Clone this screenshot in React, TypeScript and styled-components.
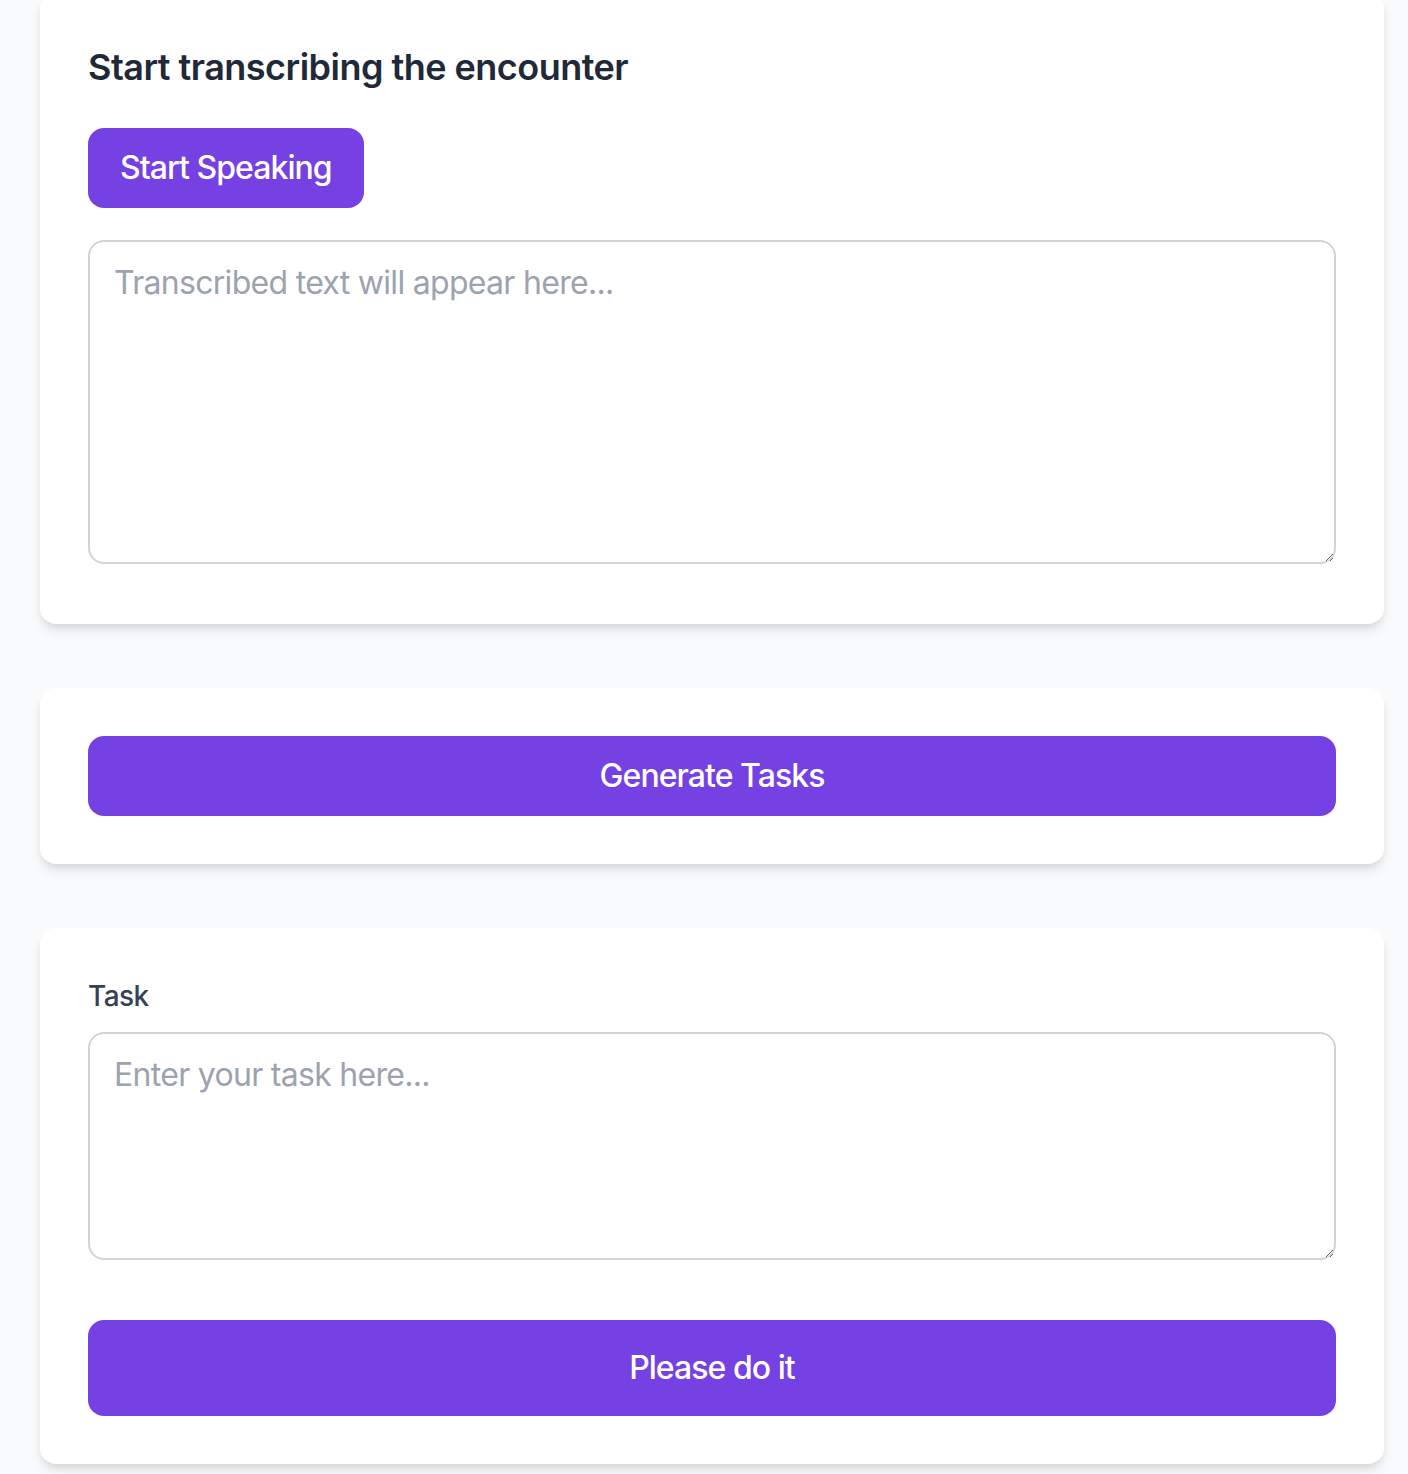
import React from "react";
import styled, { createGlobalStyle } from "styled-components";

const GlobalStyle = createGlobalStyle`
  html, body {
    margin: 0;
    padding: 0;
    background: #f9fafb;
    font-family: Inter, "Noto Sans", sans-serif;
  }
  * { box-sizing: border-box; }
`;

const Page = styled.main`
  display: flex;
  flex-direction: column;
  gap: 64px;
  padding: 0 24px 40px 40px;
  margin-top: -8px;
`;

const Card = styled.section`
  background: #ffffff;
  border-radius: 16px;
  box-shadow: 0 8px 12px -2px rgba(0, 0, 0, 0.1), 0 4px 8px -4px rgba(0, 0, 0, 0.1);
  padding: 48px;
  display: flex;
  flex-direction: column;
  align-items: flex-start;
`;

const Heading = styled.h2`
  margin: -1px 0 33px;
  font-size: 36px;
  line-height: 56px;
  font-weight: 600;
  color: #1f2937;
  letter-spacing: -0.52px;
`;

const Button = styled.button<{ $full?: boolean; $tall?: boolean }>`
  font-family: inherit;
  border: none;
  background: #7641e2;
  color: #ffffff;
  font-size: 32px;
  line-height: 48px;
  font-weight: 450;
  border-radius: 16px;
  padding: ${(p) => (p.$tall ? "24px 32px" : "16px 32px")};
  width: ${(p) => (p.$full ? "100%" : "auto")};
  cursor: pointer;
  letter-spacing: -0.95px;
`;

const TextArea = styled.textarea<{ $gap: number }>`
  display: block;
  width: 100%;
  margin-top: ${(p) => p.$gap}px;
  margin-bottom: 12px;
  border: 2px solid #d1d5db;
  border-radius: 16px;
  padding: 17px 24px 15px;
  font-family: inherit;
  font-size: 32px;
  line-height: 48px;
  color: #111827;
  background: #ffffff;
  outline: none;
  letter-spacing: -0.7px;
  &::placeholder {
    color: #9ca3af;
  }
`;

const Label = styled.label`
  font-size: 28px;
  line-height: 40px;
  font-weight: 500;
  color: #374151;
  letter-spacing: -0.6px;
`;

const Spacer = styled.div`
  height: 48px;
`;

export default function App() {
  return (
    <>
      <GlobalStyle />
      <Page>
        <Card>
          <Heading>Start transcribing the encounter</Heading>
          <Button>Start Speaking</Button>
          <TextArea $gap={32} rows={6} placeholder="Transcribed text will appear here..." />
        </Card>
        <Card>
          <Button $full>Generate Tasks</Button>
        </Card>
        <Card>
          <Label htmlFor="task">Task</Label>
          <TextArea id="task" $gap={16} rows={4} placeholder="Enter your task here..." />
          <Spacer />
          <Button $full $tall>Please do it</Button>
        </Card>
      </Page>
    </>
  );
}
